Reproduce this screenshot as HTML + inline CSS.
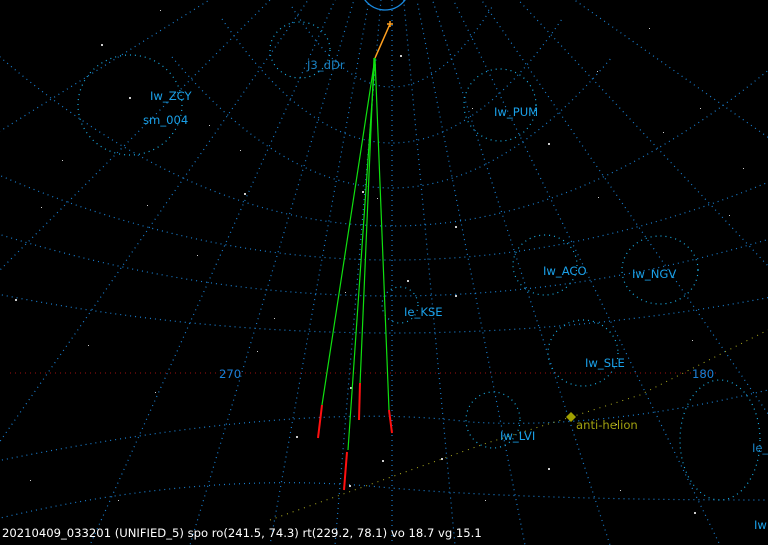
<!DOCTYPE html>
<html><head><meta charset="utf-8"><style>
html,body{margin:0;padding:0;background:#000;width:768px;height:545px;overflow:hidden}
svg{display:block}
text{font-family:"DejaVu Sans","Liberation Sans",sans-serif;font-size:11.6px}
</style></head><body>
<svg width="768" height="545" viewBox="0 0 768 545" xmlns="http://www.w3.org/2000/svg">
<rect width="768" height="545" fill="#000"/>
<g fill="none" stroke="#1a7fd0" stroke-width="1.2" stroke-dasharray="1 4">
<!-- arcs -->
<path d="M292 7 Q392 167 492 7"/>
<path d="M222 19 Q392 267 562 19"/>
<path d="M172 57 Q392 319 612 57"/>
<path d="M-8 50 Q392 402 792 50"/>
<path d="M-8 172 Q392 348 792 172"/>
<path d="M-8 232 Q392 360 792 232"/>
<path d="M-8 293 Q392 373 792 293"/>
<path d="M-8 462 Q300 400 470 422 Q600 430 768 390"/>
<path d="M-8 520 Q200 470 380 487 Q520 500 768 500"/>
<!-- radial lines -->
<path d="M392 -60 L392 545"/>
<path d="M386 -60 L335 545"/>
<path d="M380 -60 L270 545"/>
<path d="M372 -60 L190 545"/>
<path d="M362 -60 L90 545"/>
<path d="M350 -60 L-20 470"/>
<path d="M330 -60 L-30 300"/>
<path d="M305 -60 L-30 150"/>
<path d="M398 -60 L455 545"/>
<path d="M405 -60 L525 545"/>
<path d="M413 -60 L610 545"/>
<path d="M424 -60 L720 545"/>
<path d="M440 -60 L800 460"/>
<path d="M462 -60 L800 300"/>
<path d="M490 -60 L800 160"/>
</g>
<circle cx="385" cy="-15" r="25" fill="none" stroke="#1a8ae0" stroke-width="1.3"/>
<!-- shower circles -->
<g fill="none" stroke="#1ab0e8" stroke-width="1.2" stroke-dasharray="1 4">
<ellipse cx="130" cy="105" rx="52" ry="50"/>
<ellipse cx="500" cy="105" rx="36" ry="36"/>
<ellipse cx="545" cy="265" rx="32" ry="30"/>
<ellipse cx="660" cy="270" rx="38" ry="34"/>
<ellipse cx="400" cy="305" rx="18" ry="18"/>
<ellipse cx="583" cy="353" rx="35" ry="33"/>
<ellipse cx="493" cy="420" rx="27" ry="28"/>
<ellipse cx="720" cy="440" rx="40" ry="60"/>
<ellipse cx="300" cy="50" rx="30" ry="28"/>
</g>
<path d="M10 373 L720 373" stroke="#a01010" stroke-width="1" stroke-dasharray="1 4"/>
<path d="M270 520 L487 443 L571 417 L640 395 L768 330" fill="none" stroke="#b0b020" stroke-width="1" stroke-dasharray="1 5"/>
<g fill="#ccc">
<rect x="244" y="193" width="2" height="2"/><rect x="15" y="299" width="2" height="2"/>
<rect x="455" y="295" width="2" height="2"/><rect x="101" y="44" width="2" height="2"/>
<rect x="129" y="97" width="2" height="2"/><rect x="400" y="55" width="2" height="2"/>
<rect x="362" y="191" width="2" height="2"/><rect x="345" y="292" width="1" height="1"/>
<rect x="548" y="143" width="2" height="2"/><rect x="598" y="197" width="1" height="1"/>
<rect x="41" y="207" width="1" height="1"/><rect x="147" y="205" width="1" height="1"/>
<rect x="274" y="318" width="1" height="1"/><rect x="455" y="226" width="2" height="2"/>
<rect x="663" y="132" width="1" height="1"/><rect x="700" y="108" width="1" height="1"/>
<rect x="729" y="215" width="1" height="1"/><rect x="743" y="168" width="1" height="1"/>
<rect x="692" y="340" width="1" height="1"/><rect x="296" y="436" width="2" height="2"/>
<rect x="349" y="485" width="2" height="2"/><rect x="441" y="458" width="2" height="2"/>
<rect x="382" y="460" width="2" height="2"/><rect x="407" y="280" width="2" height="2"/>
<rect x="197" y="255" width="1" height="1"/><rect x="62" y="160" width="1" height="1"/>
<rect x="209" y="125" width="1" height="1"/><rect x="88" y="345" width="1" height="1"/>
<rect x="155" y="392" width="1" height="1"/><rect x="548" y="468" width="2" height="2"/>
<rect x="616" y="424" width="1" height="1"/><rect x="694" y="512" width="2" height="2"/>
<rect x="257" y="351" width="1" height="1"/><rect x="472" y="108" width="1" height="1"/>
<rect x="597" y="71" width="1" height="1"/><rect x="649" y="28" width="1" height="1"/>
<rect x="160" y="10" width="1" height="1"/><rect x="30" y="480" width="1" height="1"/>
<rect x="118" y="500" width="1" height="1"/><rect x="485" y="500" width="1" height="1"/>
<rect x="620" y="490" width="1" height="1"/><rect x="350" y="387" width="2" height="2"/>
<rect x="377" y="198" width="1" height="1"/><rect x="240" y="150" width="1" height="1"/>
</g>
<path d="M390 24 L375 58" stroke="#ffa020" stroke-width="1.5"/>
<path d="M387 24 L393 24 M390 21 L390 27" stroke="#ffa020" stroke-width="1.5"/>
<g fill="none" stroke="#10e010" stroke-width="1.2">
<path d="M375 58 L322 405"/>
<path d="M375 58 L348 450"/>
<path d="M374 58 L360 385"/>
<path d="M375 58 L389 410"/>
</g>
<g fill="none" stroke="#ff1010" stroke-width="2">
<path d="M322 405 L318 438"/>
<path d="M347 452 L344 490"/>
<path d="M360 383 L359 420"/>
<path d="M389 410 L392 433"/>
</g>
<g fill="#1aa0e8">
<text x="307" y="69" fill="#1a80c0">J3_dDr</text>
<text x="150" y="100">Iw_ZCY</text>
<text x="143" y="124">sm_004</text>
<text x="494" y="116">Iw_PUM</text>
<text x="543" y="275">Iw_ACO</text>
<text x="632" y="278">Iw_NGV</text>
<text x="404" y="316">Ie_KSE</text>
<text x="585" y="367">Iw_SLE</text>
<text x="500" y="440">Iw_LVI</text>
<text x="752" y="452" fill="#1a80c0">Ie_</text>
<text x="754" y="529">Iw</text>
<text x="219" y="378" fill="#1a80d8">270</text>
<text x="692" y="378" fill="#1a80d8">180</text>
</g>
<path d="M571 412 L576 417 L571 422 L566 417 Z" fill="#a0a000"/>
<text x="576" y="429" fill="#a0a010">anti-helion</text>
<text x="2" y="537" fill="#fff">20210409_033201 (UNIFIED_5) spo ro(241.5, 74.3) rt(229.2, 78.1) vo 18.7 vg 15.1</text>
</svg>
</body></html>
